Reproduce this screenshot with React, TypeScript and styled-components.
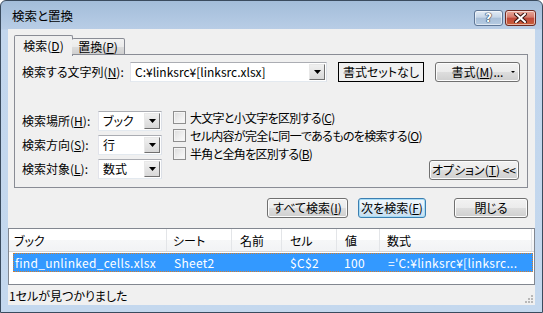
import React from 'react';
import styled, { createGlobalStyle, css } from 'styled-components';

const Global = createGlobalStyle`
  html, body { margin: 0; padding: 0; }
  body {
    width: 543px; height: 313px; overflow: hidden; background: #fff;
    font-family: "Noto Sans CJK JP", "Noto Sans", sans-serif;
    font-size: 12px; color: #000;
  }
  * { box-sizing: border-box; }
  u { text-decoration: underline; text-underline-offset: 1px; }
`;

const Jp = css`
  font-feature-settings: "palt" 1;
`;

const Window = styled.div`
  width: 543px;
  height: 313px;
  border: 1px solid #3a4b5e;
  border-radius: 6px 6px 0 0;
  background: linear-gradient(to bottom, #a3bdd9 0px, #b8cde6 28px, #c2d6ed 29px, #c4d8ee 100%);
  display: flex;
  flex-direction: column;
  padding: 0 7px 7px 7px;
`;

const TitleBar = styled.div`
  height: 28px;
  display: flex;
  align-items: flex-start;
  justify-content: space-between;
`;

const TitleText = styled.div`
  ${Jp};
  margin: 7px 0 0 4px;
  font-size: 12.5px;
  line-height: 16px;
  color: #000;
`;

const TitleButtons = styled.div`
  display: flex;
  gap: 2px;
  margin: 9px -1px 0 0;
`;

const CapButton = styled.div<{ $red?: boolean }>`
  width: ${p => (p.$red ? 31 : 29)}px;
  height: 16px;
  border-radius: 3px;
  display: flex;
  align-items: center;
  justify-content: center;
  border: 1px solid ${p => (p.$red ? '#6d2a22' : '#5e7696')};
  box-shadow: inset 0 0 0 1px rgba(255,255,255,0.55);
  ${p =>
    p.$red
      ? css`background: linear-gradient(to bottom, #e9a99b 0%, #d47a6b 45%, #c0483a 50%, #c9603a 100%);`
      : css`background: linear-gradient(to bottom, #e2ebf5 0%, #c6d6e8 45%, #a9bfd8 50%, #b5cbe2 100%);`}
  color: #fff;
  font-family: "DejaVu Sans", sans-serif;
  font-weight: bold;
  font-size: 12px;
  text-shadow: 0 0 1px #1d2f48, 0 0 1px #1d2f48, 0 0 1px #1d2f48;
`;

const Client = styled.div`
  ${Jp};
  height: 276px;
  background: #f0f0f0;
  display: flex;
  flex-direction: column;
`;

const Upper = styled.div`
  padding: 6px 7px 0 6px;
  display: flex;
  flex-direction: column;
`;

const TabStrip = styled.div`
  height: 20px;
  display: flex;
  align-items: flex-end;
  margin-bottom: -1px;
  position: relative;
  z-index: 1;
`;

const Tab = styled.div<{ $active?: boolean }>`
  display: flex;
  align-items: center;
  justify-content: center;
  border: 1px solid #898c95;
  border-radius: 2px 2px 0 0;
  ${p =>
    p.$active
      ? css`
          width: 59px; height: 21px; margin-bottom: -1px;
          border-bottom: none; background: #f0f0f0; padding-bottom: 1px;
        `
      : css`
          width: 53px; height: 17px; margin-left: -1px; border-left: none;
          background: linear-gradient(to bottom, #f2f2f2 0%, #ebebeb 50%, #dddddd 51%, #cfcfcf 100%);
        `}
`;

const Panel = styled.div`
  height: 134px;
  border: 1px solid #898c95;
  background: #f0f0f0;
  padding: 7px 8px 0 7px;
  display: flex;
  flex-direction: column;
`;

const Row = styled.div`
  display: flex;
  align-items: center;
`;

const Label = styled.div<{ $w: number }>`
  width: ${p => p.$w}px;
  flex: none;
  white-space: nowrap;
  line-height: 16px;
`;

const ComboBox = styled.div<{ $w: number }>`
  width: ${p => p.$w}px;
  height: 20px;
  flex: none;
  background: #fff;
  border: 1px solid #abadb3;
  border-color: #abadb3 #dbdfe6 #e3e9ef #e2e3ea;
  display: flex;
  align-items: center;
  padding: 0 1px 0 4px;
`;

const ComboText = styled.div`
  flex: 1;
  white-space: nowrap;
  overflow: hidden;
  line-height: 16px;
`;

const DropBtn = styled.div`
  width: 16px;
  height: 16px;
  flex: none;
  border: 1px solid #a0a0a0;
  border-color: #e8e8e8 #707070 #707070 #e8e8e8;
  background: linear-gradient(to bottom, #f0f0f0, #d8d8d8);
  display: flex;
  align-items: center;
  justify-content: center;
`;

const Arrow = () => (
  <svg width="7" height="4" viewBox="0 0 7 4">
    <path d="M0 0H7L3.5 4Z" fill="#000" />
  </svg>
);

const FormatNone = styled.div`
  width: 86px;
  height: 20px;
  flex: none;
  margin-left: 11px;
  border: 1px solid #000;
  display: flex;
  align-items: center;
  justify-content: center;
  line-height: 16px;
  white-space: nowrap;
`;

const Button = styled.div<{ $w: number; $default?: boolean; $ml?: number }>`
  width: ${p => p.$w}px;
  height: 20px;
  flex: none;
  margin-left: ${p => p.$ml ?? 0}px;
  border: 1px solid ${p => (p.$default ? '#3c7fb1' : '#707070')};
  border-radius: 3px;
  background: ${p =>
    p.$default
      ? 'linear-gradient(to bottom, #f0f7fc 0%, #e6f1f9 50%, #d6e7f4 51%, #c8dff0 100%)'
      : 'linear-gradient(to bottom, #f2f2f2 0%, #ebebeb 50%, #dddddd 51%, #cfcfcf 100%)'};
  box-shadow: inset 0 0 0 1px ${p => (p.$default ? '#a6dcf6' : '#fcfcfc')};
  display: flex;
  align-items: center;
  justify-content: center;
  position: relative;
  line-height: 16px;
  white-space: nowrap;
`;

const MenuMark = styled.span`
  position: absolute;
  right: 4px;
  top: 8px;
  width: 0;
  height: 0;
  border-left: 2px solid transparent;
  border-right: 2px solid transparent;
  border-top: 2px solid #000;
`;

const Lower = styled.div`
  display: flex;
  margin-top: 29px;
`;

const LeftCol = styled.div`
  display: flex;
  flex-direction: column;
  gap: 4px;
`;

const RightCol = styled.div`
  flex: 1;
  margin-left: 11px;
  margin-top: -3px;
  display: flex;
  flex-direction: column;
`;

const CheckRow = styled.div`
  height: 18px;
  display: flex;
  align-items: center;
  gap: 4px;
  white-space: nowrap;
  letter-spacing: -0.7px;
`;

const CheckBox = styled.div`
  width: 13px;
  height: 13px;
  border: 1px solid #8f8f8f;
  background: linear-gradient(135deg, #dcdcdc 0%, #f0f0f0 60%, #fbfbfb 100%);
  box-shadow: inset 0 0 0 1px #f4f4f4;
  flex: none;
`;

const OptionRow = styled.div`
  display: flex;
  justify-content: flex-end;
  margin-top: -2px;
`;

const ButtonRow = styled.div`
  display: flex;
  justify-content: flex-end;
  padding: 10px 7px 0 0;
`;

const List = styled.div`
  margin-top: 10px;
  height: 57px;
  border: 1px solid #828790;
  background: #fff;
  display: flex;
  flex-direction: column;
`;

const HeaderRow = styled.div`
  height: 23px;
  display: flex;
  background: linear-gradient(to bottom, #ffffff 0%, #ffffff 50%, #f6f7f8 51%, #f2f3f5 100%);
  border-bottom: 1px solid #d5d5d5;
`;

const HeaderCell = styled.div<{ $w: number; $pad: number }>`
  width: ${p => p.$w}px;
  flex: none;
  padding-left: ${p => p.$pad}px;
  border-right: 1px solid #e3e5e8;
  display: flex;
  align-items: center;
  white-space: nowrap;
`;

const DataRow = styled.div`
  height: 19px;
  margin: 1px 1px 0 4px;
  background: #3399ff;
  border: 1px dotted #d77d2a;
  display: flex;
  color: #fff;
`;

const DataCell = styled.div<{ $w: number; $pad: number }>`
  width: ${p => p.$w}px;
  flex: none;
  padding-left: ${p => p.$pad}px;
  display: flex;
  align-items: center;
  white-space: nowrap;
  overflow: hidden;
  letter-spacing: 0.3px;
  font-feature-settings: normal;
`;

const StatusBar = styled.div`
  flex: 1;
  display: flex;
  align-items: center;
  padding-left: 1px;
  position: relative;
`;

const Grip = styled.svg`
  position: absolute;
  right: 2px;
  bottom: 2px;
`;

const columns = [
  { label: 'ブック', w: 158, hp: 5, value: 'find_unlinked_cells.xlsx', dp: 1 },
  { label: 'シート', w: 65, hp: 6, value: 'Sheet2', dp: 6 },
  { label: '名前', w: 50, hp: 8, value: '', dp: 6 },
  { label: 'セル', w: 55, hp: 8, value: '$C$2', dp: 7 },
  { label: '値', w: 43, hp: 8, value: '100', dp: 6 },
  { label: '数式', w: 152, hp: 7, value: "='C:¥linksrc¥[linksrc...", dp: 7 },
];

const checks = [
  ['大文字と小文字を区別する', 'C'],
  ['セル内容が完全に同一であるものを検索する', 'O'],
  ['半角と全角を区別する', 'B'],
];

const selects = [
  ['検索場所', 'H', 'ブック'],
  ['検索方向', 'S', '行'],
  ['検索対象', 'L', '数式'],
];

export default function App() {
  return (
    <>
      <Global />
      <Window>
        <TitleBar>
          <TitleText>検索と置換</TitleText>
          <TitleButtons>
            <CapButton>?</CapButton>
            <CapButton $red>
              <svg width="13" height="10" viewBox="0 0 13 10">
                <path d="M2 1L11 9M11 1L2 9" stroke="#3a1410" strokeWidth="4" strokeLinecap="square" />
                <path d="M2 1L11 9M11 1L2 9" stroke="#fff" strokeWidth="2" strokeLinecap="square" />
              </svg>
            </CapButton>
          </TitleButtons>
        </TitleBar>
        <Client>
          <Upper>
            <TabStrip>
              <Tab $active><span>検索(<u>D</u>)</span></Tab>
              <Tab><span>置換(<u>P</u>)</span></Tab>
            </TabStrip>
            <Panel>
              <Row>
                <Label $w={108}>検索する文字列(<u>N</u>):</Label>
                <ComboBox $w={197}>
                  <ComboText>C:¥linksrc¥[linksrc.xlsx]</ComboText>
                  <DropBtn><Arrow /></DropBtn>
                </ComboBox>
                <FormatNone>書式セットなし</FormatNone>
                <Button $w={85} $ml={11}>
                  <span>書式(<u>M</u>)...</span>
                  <MenuMark />
                </Button>
              </Row>
              <Lower>
                <LeftCol>
                  {selects.map(([label, key, value]) => (
                    <Row key={key}>
                      <Label $w={76}>{label}(<u>{key}</u>):</Label>
                      <ComboBox $w={64}>
                        <ComboText>{value}</ComboText>
                        <DropBtn><Arrow /></DropBtn>
                      </ComboBox>
                    </Row>
                  ))}
                </LeftCol>
                <RightCol>
                  {checks.map(([text, key]) => (
                    <CheckRow key={key}>
                      <CheckBox />
                      <span>{text}(<u>{key}</u>)</span>
                    </CheckRow>
                  ))}
                  <OptionRow>
                    <Button $w={90}><span>オプション(<u>T</u>) &lt;&lt;</span></Button>
                  </OptionRow>
                </RightCol>
              </Lower>
            </Panel>
          </Upper>
          <ButtonRow>
            <Button $w={81}><span>すべて検索(<u>I</u>)</span></Button>
            <Button $w={68} $default $ml={10}><span>次を検索(<u>F</u>)</span></Button>
            <Button $w={74} $ml={28}>閉じる</Button>
          </ButtonRow>
          <List>
            <HeaderRow>
              {columns.map(c => (
                <HeaderCell key={c.label} $w={c.w} $pad={c.hp}>{c.label}</HeaderCell>
              ))}
            </HeaderRow>
            <DataRow>
              {columns.map((c, i) => (
                <DataCell key={c.label} $w={i === 0 ? c.w - 4 : i === columns.length - 1 ? c.w - 3 : c.w} $pad={c.dp}>
                  {c.value}
                </DataCell>
              ))}
            </DataRow>
          </List>
          <StatusBar>
            1セルが見つかりました
            <Grip width="9" height="9" viewBox="0 0 9 9">
              {[[7, 1], [4, 4], [7, 4], [1, 7], [4, 7], [7, 7]].map(([x, y]) => (
                <rect key={`${x}-${y}`} x={x} y={y} width="2" height="2" fill="#b8b8b8" />
              ))}
            </Grip>
          </StatusBar>
        </Client>
      </Window>
    </>
  );
}
